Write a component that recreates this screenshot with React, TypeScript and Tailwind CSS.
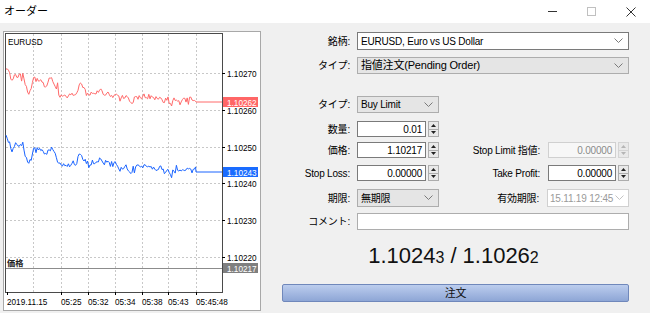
import React from 'react'

const FONT = '"Liberation Sans", "Noto Sans CJK JP", sans-serif'

// 擬似乱数 (チャートのギザギザ用)
function rng(seed: number) {
  let a = seed
  return () => {
    a |= 0
    a = (a + 0x6d2b79f5) | 0
    let t = Math.imul(a ^ (a >>> 15), 1 | a)
    t = (t + Math.imul(t ^ (t >>> 7), 61 | t)) ^ t
    return ((t ^ (t >>> 14)) >>> 0) / 4294967296
  }
}

const anchors: [number, number][] = [
  [6, 65], [9, 72], [12, 82], [15, 74], [19, 76], [23, 73], [26, 88], [28, 94], [31, 90], [33, 78],
  [37, 80], [41, 78], [45, 86], [48, 82], [52, 77], [56, 88], [60, 95], [64, 93], [68, 96], [72, 92],
  [76, 95], [80, 82], [84, 90], [88, 96], [92, 92], [96, 95], [100, 88], [104, 96], [108, 93], [112, 96],
  [116, 93], [120, 100], [124, 96], [128, 98], [132, 103], [136, 96], [140, 98], [144, 95], [148, 97],
  [152, 98], [156, 100], [160, 97], [164, 102], [168, 98], [170, 106], [174, 100], [178, 103], [182, 99],
  [186, 101], [190, 98], [194, 99], [196, 101],
]

function buildSeries(seed: number, offset: number) {
  const r = rng(seed)
  const pts: string[] = []
  for (let x = 6; x <= 196; x += 1.2) {
    let i = 0
    while (i < anchors.length - 2 && anchors[i + 1][0] < x) i++
    const [x0, y0] = anchors[i]
    const [x1, y1] = anchors[i + 1]
    const t = Math.min(1, Math.max(0, (x - x0) / (x1 - x0)))
    let y = y0 + (y1 - y0) * t
    y += (r() - 0.5) * 5
    if (r() < 0.1) y += (r() - 0.5) * 14
    pts.push(`${x.toFixed(1)},${(y + offset).toFixed(1)}`)
  }
  pts.push(`196,${102 + offset}`)
  pts.push(`222,${102 + offset}`)
  return pts.join(' ')
}

const askLine = buildSeries(7, 0)
const bidLine = buildSeries(11, 70)

const gridX = [33, 61, 88, 115, 142, 168, 196]
const gridY: [number, string][] = [
  [73, '1.10270'], [110, '1.10260'], [147, '1.10250'], [183, '1.10240'], [220, '1.10230'], [257, '1.10220'],
]
const times: [number, string][] = [
  [7, '2019.11.15'], [61, '05:25'], [88, '05:32'], [115, '05:34'], [142, '05:38'], [168, '05:43'], [196, '05:45:48'],
]

function Chart() {
  return (
    <div className="ml-[3px] mt-[8px] w-[258px] h-[280px] border border-[#a8a8a8] bg-white">
      <svg width={256} height={278} viewBox="4 32 256 278" style={{ fontFamily: FONT }}>
        <rect x={4} y={32} width={256} height={278} fill="#fff" />
        {gridX.map((x) => (
          <line key={x} x1={x + 0.5} y1={34} x2={x + 0.5} y2={292} stroke="#c8c8c8" strokeDasharray="2 2" />
        ))}
        {gridY.map(([y]) => (
          <line key={y} x1={6} y1={y + 0.5} x2={222} y2={y + 0.5} stroke="#c8c8c8" strokeDasharray="2 2" />
        ))}
        <rect x={5.5} y={33.5} width={217} height={259} fill="none" stroke="#4a4a4a" />
        {gridY.map(([y, label]) => (
          <g key={label}>
            <line x1={222} y1={y + 0.5} x2={225} y2={y + 0.5} stroke="#000" />
            <text x={227} y={y + 4} fontSize={8.2} fill="#000">{label}</text>
          </g>
        ))}
        {times.map(([x, label]) => (
          <g key={label}>
            <line x1={x + 0.5} y1={292} x2={x + 0.5} y2={295} stroke="#000" />
            <text x={x} y={305} fontSize={8.2} fill="#000">{label}</text>
          </g>
        ))}
        <text x={8} y={45} fontSize={8.2} fill="#000">EURUSD</text>

        <polyline points={askLine} fill="none" stroke="#ff6a6a" strokeWidth={1} />
        <polyline points={bidLine} fill="none" stroke="#1a64ff" strokeWidth={1} />

        <line x1={6} y1={268.5} x2={222} y2={268.5} stroke="#8c8c8c" />
        <text x={7} y={266} fontSize={8.2} fontWeight="bold" fill="#222">価格</text>

        <rect x={223} y={97} width={35} height={10} fill="#ff6666" />
        <text x={227} y={105.5} fontSize={8.2} fill="#fff">1.10262</text>
        <rect x={223} y={167} width={35} height={10} fill="#1a6cff" />
        <text x={227} y={175.5} fontSize={8.2} fill="#fff">1.10243</text>
        <rect x={223} y={263} width={35} height={10} fill="#7f7f7f" />
        <text x={227} y={271.5} fontSize={8.2} fill="#fff">1.10217</text>
      </svg>
    </div>
  )
}

function Chevron({ light }: { light?: boolean }) {
  return (
    <svg width="9" height="6" viewBox="0 0 9 6" className="shrink-0">
      <polyline points="0.5,0.5 4.5,4.5 8.5,0.5" fill="none" stroke={light ? '#c4c4c4' : '#7a7a7a'} strokeWidth="1" />
    </svg>
  )
}

function Spinner({ disabled }: { disabled?: boolean }) {
  const c = disabled ? '#b5b5b5' : '#222'
  const b = disabled ? 'border-[#d4d4d4]' : 'border-[#adadad]'
  return (
    <div className={`w-[11px] h-full flex flex-col border ${b} bg-[#e9e9e9]`}>
      <div className={`flex-1 flex items-center justify-center border-b ${b}`}>
        <svg width="5" height="3" viewBox="0 0 5 3"><polygon points="0,3 5,3 2.5,0" fill={c} /></svg>
      </div>
      <div className="flex-1 flex items-center justify-center">
        <svg width="5" height="3" viewBox="0 0 5 3"><polygon points="0,0 5,0 2.5,3" fill={c} /></svg>
      </div>
    </div>
  )
}

function Label({ children }: { children: React.ReactNode }) {
  return <div className="w-[69px] shrink-0 text-right pr-[1px] whitespace-nowrap">{children}</div>
}

function NumberInput({ value, disabled, width }: { value: string; disabled?: boolean; width: string }) {
  return (
    <div className="flex items-stretch h-full gap-[2px]">
      <div
        className={`${width} h-full flex items-center justify-end pr-[3px] ${
          disabled ? 'border border-[#d0d0d0] bg-[#f7f7f7] text-[#8a8a8a]' : 'border border-[#7a7a7a] bg-white text-black'
        }`}
      >
        {value}
      </div>
      <Spinner disabled={disabled} />
    </div>
  )
}

export default function App() {
  return (
    <div className="w-[650px] h-[313px] flex flex-col overflow-hidden" style={{ fontFamily: FONT }}>
      {/* タイトルバー */}
      <div className="h-[23px] shrink-0 bg-white flex items-center">
        <span className="pl-[4px] text-[11px] text-black">オーダー</span>
        <div className="ml-auto flex items-center h-full">
          <div className="w-[39px] h-full flex items-center justify-center">
            <div className="w-[9px] h-px bg-[#333]" />
          </div>
          <div className="w-[39px] h-full flex items-center justify-center">
            <div className="w-[9px] h-[9px] border border-[#c0c0c0]" />
          </div>
          <div className="w-[39px] h-full flex items-center justify-center">
            <svg width="10" height="10" viewBox="0 0 10 10">
              <path d="M0.5 0.5 L9.5 9.5 M9.5 0.5 L0.5 9.5" stroke="#333" strokeWidth="1" />
            </svg>
          </div>
        </div>
      </div>

      {/* 本体 */}
      <div className="flex-1 bg-[#f0f0f0] flex">
        <Chart />

        <div className="ml-[21px] w-[347px] flex flex-col pt-[9px] text-[10px] tracking-[-0.2px] text-black">
          <div className="h-[18px] flex items-center">
            <Label>銘柄:</Label>
            <div className="ml-[6px] flex-1 h-full border border-[#7a7a7a] bg-white flex items-center pl-[3px] pr-[5px]">
              <span className="flex-1">EURUSD, Euro vs US Dollar</span>
              <Chevron />
            </div>
          </div>

          <div className="mt-[7px] h-[17px] flex items-center">
            <Label>タイプ:</Label>
            <div className="ml-[6px] flex-1 h-full border border-[#adadad] bg-[#e5e5e5] flex items-center pl-[3px] pr-[5px]">
              <span className="flex-1 text-[11px]">指値注文(Pending Order)</span>
              <Chevron />
            </div>
          </div>

          <div className="mt-[22px] h-[17px] flex items-center">
            <Label>タイプ:</Label>
            <div className="ml-[6px] w-[82px] h-full border border-[#adadad] bg-[#e5e5e5] flex items-center pl-[3px] pr-[5px]">
              <span className="flex-1">Buy Limit</span>
              <Chevron />
            </div>
          </div>

          <div className="mt-[8px] h-[16px] flex items-center">
            <Label>数量:</Label>
            <div className="ml-[6px] h-full">
              <NumberInput value="0.01" width="w-[69px]" />
            </div>
          </div>

          <div className="mt-[5px] h-[16px] flex items-center">
            <Label>価格:</Label>
            <div className="ml-[6px] h-full">
              <NumberInput value="1.10217" width="w-[69px]" />
            </div>
            <div className="ml-auto flex items-center h-full">
              <span className="mr-[8px]">Stop Limit 指値:</span>
              <NumberInput value="0.00000" width="w-[68px]" disabled />
            </div>
          </div>

          <div className="mt-[7px] h-[16px] flex items-center">
            <Label>Stop Loss:</Label>
            <div className="ml-[6px] h-full">
              <NumberInput value="0.00000" width="w-[69px]" />
            </div>
            <div className="ml-auto flex items-center h-full">
              <span className="mr-[8px]">Take Profit:</span>
              <NumberInput value="0.00000" width="w-[68px]" />
            </div>
          </div>

          <div className="mt-[8px] h-[18px] flex items-center">
            <Label>期限:</Label>
            <div className="ml-[6px] w-[82px] h-full border border-[#adadad] bg-[#e5e5e5] flex items-center pl-[3px] pr-[5px]">
              <span className="flex-1">無期限</span>
              <Chevron />
            </div>
            <div className="ml-auto flex items-center h-full">
              <span className="mr-[8px]">有効期限:</span>
              <div className="w-[82px] h-full border border-[#d0d0d0] bg-white flex items-center pl-[2px] pr-[4px] text-[#9a9a9a]">
                <span className="flex-1 whitespace-nowrap">15.11.19 12:45</span>
                <Chevron light />
              </div>
            </div>
          </div>

          <div className="mt-[6px] h-[17px] flex items-center">
            <Label>コメント:</Label>
            <div className="ml-[6px] flex-1 h-full border border-[#adadad] bg-white" />
          </div>

          <div className="mt-[10px] h-[30px] flex items-center justify-center pr-[4px] text-[#111] tracking-normal">
            <span className="text-[22px]">1.1024</span>
            <span className="text-[16px] mt-[5px]">3</span>
            <span className="text-[22px] mx-[6px]">/</span>
            <span className="text-[22px]">1.1026</span>
            <span className="text-[16px] mt-[5px]">2</span>
          </div>

          <div className="mt-[14px] h-[18px] rounded-[2px] border border-[#7088bb] bg-gradient-to-b from-[#bccdee] to-[#8ea6d6] flex items-center justify-center text-[11px] text-[#111]">
            注文
          </div>
        </div>
      </div>
    </div>
  )
}
